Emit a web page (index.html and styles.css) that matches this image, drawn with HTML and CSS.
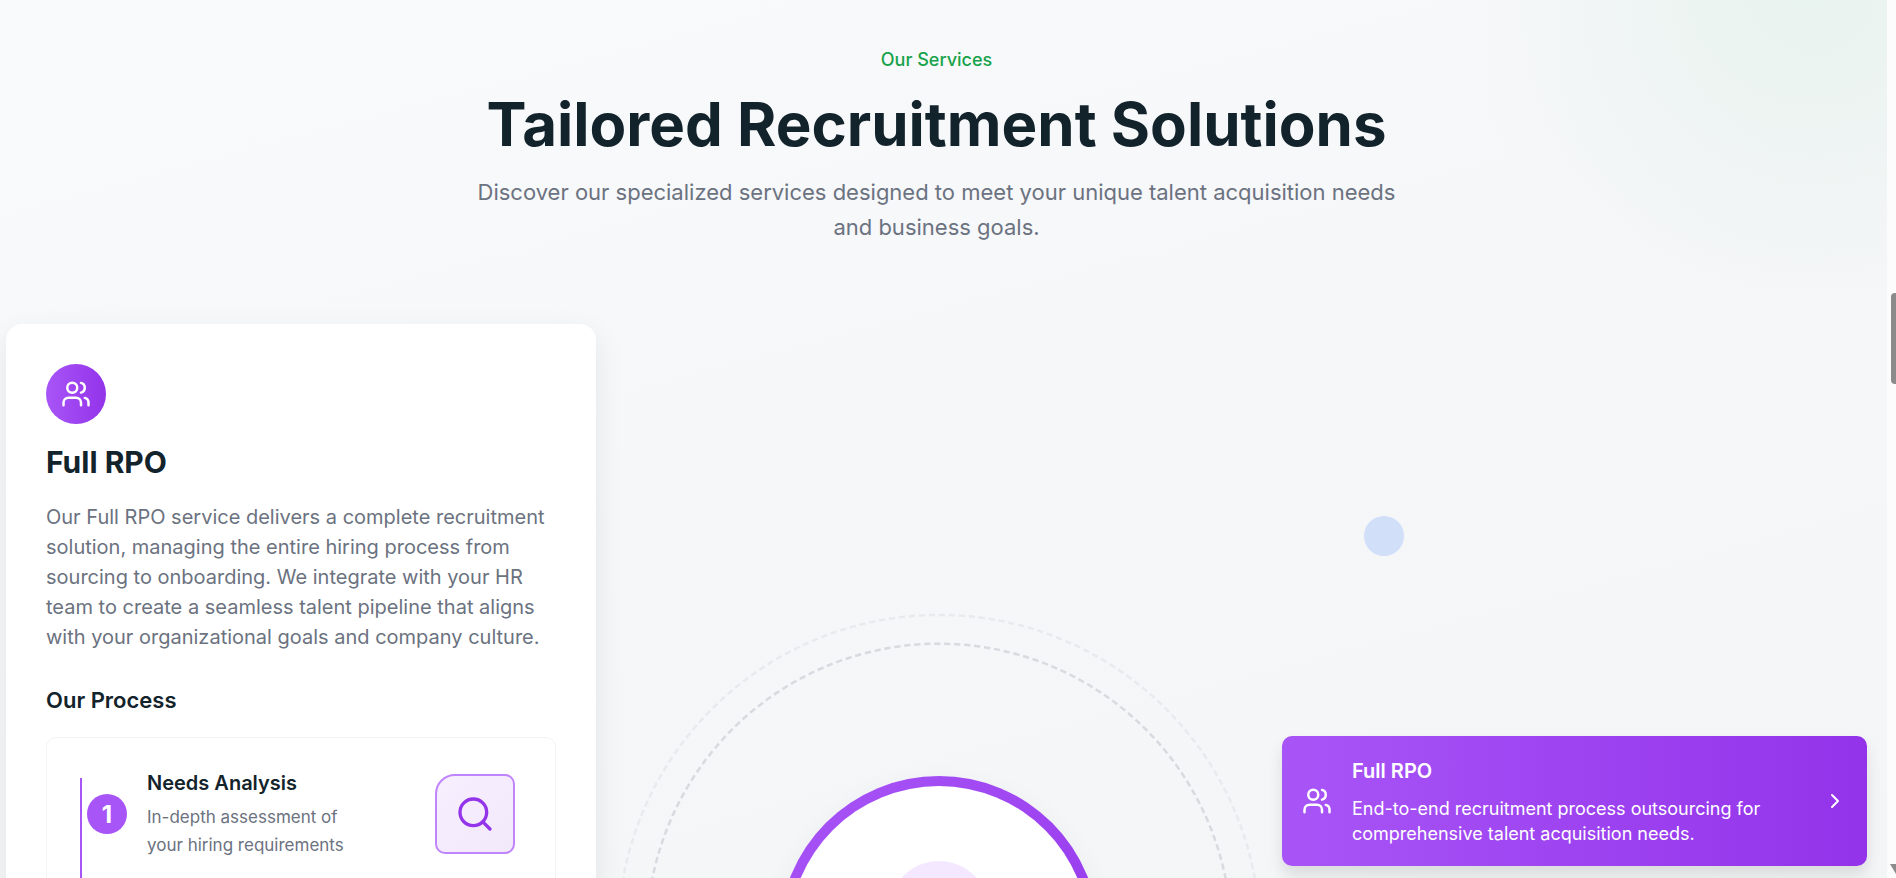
FILE: index.html
```html
<!DOCTYPE html>
<html lang="en">
<head>
<meta charset="utf-8">
<title>Our Services</title>
<link rel="stylesheet" href="styles.css">
</head>
<body>
<main class="services">
  <header class="intro">
    <p class="eyebrow">Our Services</p>
    <h1 class="headline">Tailored Recruitment Solutions</h1>
    <p class="lead">Discover our specialized services designed to meet your unique talent acquisition needs and business goals.</p>
  </header>
  <div class="columns">
    <article class="detail">
      <span class="badge">
        <svg class="icon-badge" viewBox="0 0 24 24" aria-hidden="true"><path d="M16 21v-2a4 4 0 0 0-4-4H6a4 4 0 0 0-4 4v2"/><circle cx="9" cy="7" r="4"/><path d="M22 21v-2a4 4 0 0 0-3-3.87"/><path d="M16 3.13a4 4 0 0 1 0 7.75"/></svg>
      </span>
      <h2 class="detail-title">Full RPO</h2>
      <p class="detail-text">Our Full RPO service delivers a complete recruitment solution, managing the entire hiring process from sourcing to onboarding. We integrate with your HR team to create a seamless talent pipeline that aligns with your organizational goals and company culture.</p>
      <h3 class="process-title">Our Process</h3>
      <ol class="process">
        <li class="step">
          <span class="step-number">1</span>
          <div class="step-body">
            <h4 class="step-title">Needs Analysis</h4>
            <p class="step-text">In-depth assessment of your hiring requirements</p>
          </div>
          <span class="step-art">
            <svg class="icon-art" viewBox="0 0 24 24" aria-hidden="true"><circle cx="11" cy="11" r="8"/><path d="m21 21-4.3-4.3"/></svg>
          </span>
        </li>
      </ol>
    </article>
    <div class="stage">
      <svg class="rings" viewBox="0 0 516 516" aria-hidden="true">
        <circle class="ring-outer" cx="258" cy="258" r="256.5"/>
        <circle class="ring-inner" cx="258" cy="258" r="233.5"/>
      </svg>
      <div class="hub"><div class="hub-face"><span class="hub-dot"></span></div></div>
    </div>
    <nav class="options" aria-label="Services">
      <span class="float-dot"></span>
      <button class="option" type="button">
        <svg class="icon-option" viewBox="0 0 24 24" aria-hidden="true"><path d="M16 21v-2a4 4 0 0 0-4-4H6a4 4 0 0 0-4 4v2"/><circle cx="9" cy="7" r="4"/><path d="M22 21v-2a4 4 0 0 0-3-3.87"/><path d="M16 3.13a4 4 0 0 1 0 7.75"/></svg>
        <span class="option-body">
          <span class="option-title">Full RPO</span>
          <span class="option-text">End-to-end recruitment process outsourcing for comprehensive talent acquisition needs.</span>
        </span>
        <svg class="icon-chevron" viewBox="0 0 24 24" aria-hidden="true"><path d="m9 18 6-6-6-6"/></svg>
      </button>
    </nav>
  </div>
</main>
<div class="scroll-track" aria-hidden="true"><span class="scroll-thumb"></span><span class="scroll-arrow"></span></div>
</body>
</html>
```
FILE: styles.css
```css
* { box-sizing: border-box; margin: 0; padding: 0; }
body {
  display: flex;
  height: 100vh;
  overflow: hidden;
  background: #fcfcfc;
  color: #13232b;
  font-family: Inter, "Liberation Sans", sans-serif;
}
svg { flex: none; fill: none; stroke: currentColor; stroke-width: 2; stroke-linecap: round; stroke-linejoin: round; }
.services {
  flex: 1;
  min-width: 0;
  padding: 45px 20px 0 6px;
  overflow: hidden;
  background:
    radial-gradient(circle 360px at calc(100% - 80px) -30px, rgba(22, 163, 74, 0.07), rgba(22, 163, 74, 0)),
    linear-gradient(165deg, #f9fafc, #f6f7f9 50%, #f4f5f7);
}
.intro { display: flex; flex-direction: column; align-items: center; text-align: center; }
.eyebrow { color: #16a34a; font-size: 18px; font-weight: 500; line-height: 30px; }
.headline { margin-top: 13px; font-size: 60px; font-weight: 700; line-height: 72px; }
.lead { max-width: 960px; margin-top: 15px; color: #6b7280; font-size: 22px; line-height: 35px; }
.columns { display: grid; grid-template-columns: 590fr 686fr 585fr; align-items: start; margin-top: 79px; }
.detail { padding: 40px; border-radius: 16px; background: #fff; box-shadow: 0 10px 30px rgba(0, 0, 0, 0.08); }
.badge {
  display: flex; align-items: center; justify-content: center;
  width: 60px; height: 60px; border-radius: 50%;
  background: linear-gradient(90deg, #a855f7, #9333ea); color: #fff;
}
.icon-badge, .icon-option { width: 30px; height: 30px; }
.detail-title { margin-top: 20px; font-size: 30px; font-weight: 700; line-height: 36px; }
.detail-text { margin-top: 22px; color: #6b7280; font-size: 20px; line-height: 30px; }
.process-title { margin-top: 32px; font-size: 22px; font-weight: 600; line-height: 32px; }
.process { margin-top: 21px; padding: 36px 40px 40px 33px; border: 1px solid #f3f4f6; border-radius: 10px; list-style: none; }
.step { position: relative; display: flex; align-items: flex-start; padding-left: 7px; min-height: 140px; }
.step::before { content: ""; position: absolute; left: 0; top: 4px; bottom: 0; width: 2px; background: #a855f7; }
.step-number {
  display: flex; flex: none; align-items: center; justify-content: center;
  width: 40px; height: 40px; margin-top: 20px; border-radius: 50%;
  background: #a855f7; color: #fff; font-size: 24px; font-weight: 700;
}
.step-body { flex: 1; margin-left: 20px; }
.step-title { font-size: 20px; font-weight: 600; line-height: 18px; }
.step-text { max-width: 220px; margin-top: 11px; color: #6b7280; font-size: 17px; line-height: 28px; }
.step-art {
  display: flex; flex: none; align-items: center; justify-content: center;
  width: 80px; height: 80px; border: 2px solid #c084fc; border-radius: 20px 10px 10px;
  background: linear-gradient(135deg, #f7effe, #f2e9fb); color: #9333ea;
}
.icon-art { width: 40px; height: 40px; }
.stage { display: grid; place-items: center; padding-top: 289px; }
.stage > * { grid-area: 1 / 1; }
.rings { width: 646px; height: 646px; stroke-linecap: butt; stroke-dasharray: 5 3; }
.ring-outer { stroke: #e8eaed; }
.ring-inner { stroke: #d8dadf; }
.hub { width: 320px; height: 320px; padding: 10px; border-radius: 50%; background: linear-gradient(135deg, #a855f7, #9333ea); box-shadow: 0 10px 30px rgba(0, 0, 0, 0.05); }
.hub-face { display: flex; justify-content: center; height: 100%; padding-top: 75px; border-radius: 50%; background: #fff; }
.hub-dot { width: 100px; height: 100px; border-radius: 50%; background: #f3e8ff; }
.options { position: relative; padding-top: 412px; }
.float-dot { position: absolute; left: 82px; top: 192px; width: 40px; height: 40px; border-radius: 50%; background: #d1dff8; }
.option {
  display: flex; align-items: center; gap: 20px;
  width: 100%; min-height: 130px; padding: 20px; border: 0; border-radius: 10px;
  background: linear-gradient(90deg, #a855f7, #9333ea); color: #fff;
  box-shadow: 0 10px 15px rgba(0, 0, 0, 0.1);
  font-family: inherit; text-align: left; cursor: pointer;
}
.option-body { display: flex; flex: 1; flex-direction: column; gap: 10px; }
.option-title { font-size: 20px; font-weight: 600; line-height: 30px; }
.option-text { max-width: 440px; font-size: 18px; line-height: 25px; }
.icon-chevron { width: 24px; height: 24px; }
.scroll-track { position: relative; flex: none; width: 9px; overflow: hidden; background: #fcfcfc; }
.scroll-thumb { position: absolute; left: 4px; top: 293px; width: 8px; height: 91px; border-radius: 4px; background: #8b8b8b; }
.scroll-arrow { position: absolute; left: 3px; bottom: 4px; border: 6px solid transparent; border-top: 10px solid #8b8b8b; border-bottom: 0; }
```
